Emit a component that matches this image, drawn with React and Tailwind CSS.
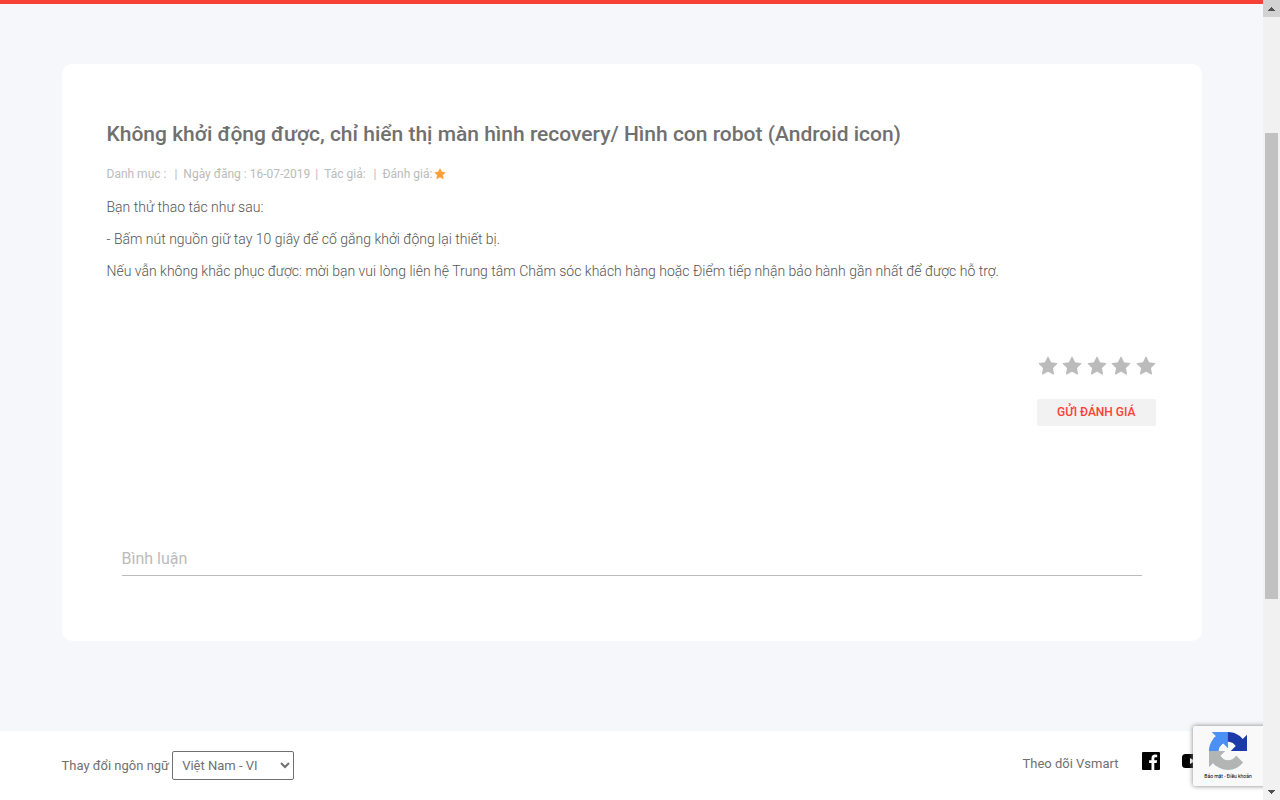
import React from "react";

const STAR_PATH =
  "M12 1.5l3.2 6.6 7.3 1-5.3 5.1 1.3 7.3-6.5-3.4-6.5 3.4 1.3-7.3-5.3-5.1 7.3-1z";

const Star = ({ className }) => (
  <svg viewBox="0 0 24 24" fill="currentColor" className={className}>
    <path
      d={STAR_PATH}
      stroke="currentColor"
      strokeWidth="1.4"
      strokeLinejoin="round"
    />
  </svg>
);

const Article = () => (
  <article>
    <h1 className="text-[21px] leading-7 font-medium text-[#707070]">
      Không khởi động được, chỉ hiển thị màn hình recovery/ Hình con robot
      (Android icon)
    </h1>
    <div className="mt-4 flex flex-wrap items-center text-xs leading-5 text-[#bbb]">
      <span className="mr-2">Danh mục :</span>
      <span className="mr-1.5">|</span>
      <span className="mr-[5px]">Ngày đăng : 16-07-2019</span>
      <span className="mr-1.5">|</span>
      <span className="mr-2">Tác giả:</span>
      <span className="mr-1.5">|</span>
      <span>Đánh giá:</span>
      <Star className="ml-0.5 size-3 text-[#ff9f39]" />
    </div>
    <div className="mt-[11px] space-y-2 text-sm leading-6 font-light text-[#555]">
      <p>Bạn thử thao tác như sau:</p>
      <p>- Bấm nút nguồn giữ tay 10 giây để cố gắng khởi động lại thiết bị.</p>
      <p>
        Nếu vẫn không khắc phục được: mời bạn vui lòng liên hệ Trung tâm Chăm
        sóc khách hàng hoặc Điểm tiếp nhận bảo hành gần nhất để được hỗ trợ.
      </p>
    </div>
  </article>
);

const Rating = () => (
  <div className="mt-[73px] mr-px flex flex-col items-end">
    <div className="flex w-[118px] justify-between">
      {[1, 2, 3, 4, 5].map((value) => (
        <button key={value} type="button" aria-label={`${value} sao`}>
          <Star className="block size-5 text-[#bbb]" />
        </button>
      ))}
    </div>
    <button
      type="button"
      className="mt-[23px] h-[27px] rounded-xs bg-[#f2f2f2] px-5 pb-0.5 text-xs font-medium text-[#f84136]"
    >
      GỬI ĐÁNH GIÁ
    </button>
  </div>
);

const Recaptcha = () => (
  <div className="absolute -right-[186px] bottom-[14px] flex h-[60px] w-64 flex-col rounded-xs bg-[#f9f9f9] shadow-[0_0_5px_gray]">
    <div className="flex w-[70px] flex-col items-center pt-1.5">
      <svg viewBox="0 0 64 64" className="size-[38px]">
        <path
          d="M64 32V4.7l-7.2 7.1C51 4.7 42 .1 32 .1c-10.4 0-19.6 5-25.4 12.6l11.7 11.9a15.5 15.5 0 0 1 4.8-5.3c2-1.6 4.9-2.9 8.9-2.9.5 0 .9 0 1.2.1 5 .4 9.3 3.2 11.8 7.2L36.7 32z"
          fill="#1c3aa9"
        />
        <path
          d="M31.9.1H4.6l7.2 7.2C4.6 13.1 0 22.1 0 32c0 10.4 5 19.6 12.6 25.5l11.9-11.7a15.5 15.5 0 0 1-5.3-4.8c-1.6-2-2.9-4.9-2.9-9 0-.4 0-.8.1-1.1.4-5 3.2-9.3 7.2-11.8l8.3 8.3z"
          fill="#4a90f5"
        />
        <path
          d="M0 32v27.3l7.2-7.1C13.1 59.3 22 63.9 32 63.9c10.4 0 19.6-5 25.4-12.6L45.7 39.4a15.5 15.5 0 0 1-4.8 5.3c-2 1.6-4.9 2.9-8.9 2.9-.5 0-.9 0-1.2-.1-5-.4-9.3-3.2-11.8-7.2l8.3-8.3z"
          fill="#b3b5b5"
        />
      </svg>
      <div className="mt-[3px] flex text-[5px] leading-[6px] whitespace-pre text-black">
        <a href="#privacy">Bảo mật</a>
        <span> - </span>
        <a href="#terms">Điều khoản</a>
      </div>
    </div>
  </div>
);

const Footer = () => (
  <footer className="bg-white pt-5 pb-5">
    <div className="mx-auto flex max-w-[1140px] justify-between text-[13px] text-[#707070]">
      <div className="flex items-center gap-[3px]">
        <label htmlFor="language">Thay đổi ngôn ngữ</label>
        <select
          id="language"
          className="h-[29px] w-[122px] rounded-xs border border-[#707070] bg-white px-[5px]"
        >
          <option>Việt Nam - VI</option>
        </select>
      </div>
      <div className="flex h-[26px] items-center">
        <span className="mr-[23px]">Theo dõi Vsmart</span>
        <a href="#facebook" aria-label="Facebook" className="mr-[22px] -mt-1.5">
          <svg viewBox="0 0 18 18" className="size-[18px]">
            <rect width="18" height="18" rx="1" fill="#000" />
            <path
              d="M12.3 18v-7h2.4l.4-2.7h-2.8V6.5c0-.8.3-1.3 1.4-1.3h1.5V2.7a18 18 0 0 0-2.2-.1c-2.1 0-3.5 1.3-3.5 3.6v2.1H7.1V11h2.4v7z"
              fill="#fff"
            />
          </svg>
        </a>
        <a href="#youtube" aria-label="YouTube" className="-mt-1.5">
          <svg viewBox="0 0 20 14" className="h-[14px] w-5">
            <rect width="20" height="14" rx="3.5" fill="#000" />
            <path d="M8 4v6l5-3z" fill="#fff" />
          </svg>
        </a>
      </div>
    </div>
  </footer>
);

const Scrollbar = () => (
  <div className="flex w-[17px] shrink-0 flex-col items-center bg-[#f1f1f1]">
    <div className="flex h-[17px] w-full items-center justify-center bg-[#d2d2d2]">
      <svg viewBox="0 0 7 4" className="h-1 w-[7px]" shapeRendering="crispEdges">
        <path d="M0 4L3.5 0 7 4z" fill="#505050" />
      </svg>
    </div>
    <div className="mt-[116px] h-[466px] w-[13px] bg-[#c1c1c1]" />
    <div className="mt-auto flex h-[17px] items-center">
      <svg viewBox="0 0 7 4" className="h-1 w-[7px]" shapeRendering="crispEdges">
        <path d="M0 0h7L3.5 4z" fill="#505050" />
      </svg>
    </div>
  </div>
);

const App = () => {
  return (
    <div className="flex min-h-screen bg-white font-['Roboto',sans-serif]">
      <div className="relative min-w-0 flex-1 overflow-hidden">
        <main className="border-t-4 border-[#f84136] bg-[#f5f7fb] pt-[60px] pb-[90px]">
          <div className="mx-auto max-w-[1140px] rounded-[10px] bg-white px-[45px] pt-14 pb-[65px]">
            <Article />
            <Rating />
            <div className="mt-[116px] px-[15px]">
              <input
                type="text"
                aria-label="Bình luận"
                placeholder="Bình luận"
                className="block h-[34px] w-full border-b border-[#bbb] text-base placeholder:text-[#bbb] focus:outline-none"
              />
            </div>
          </div>
        </main>
        <Footer />
        <Recaptcha />
      </div>
      <Scrollbar />
    </div>
  );
};

export default App;
